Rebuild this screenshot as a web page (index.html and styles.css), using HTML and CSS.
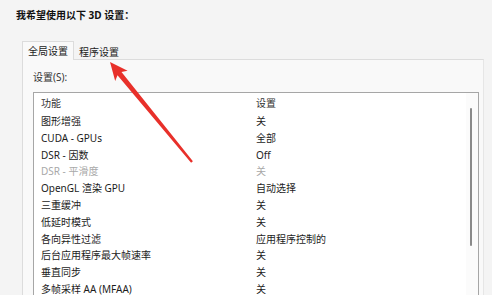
FILE: index.html
```html
<!DOCTYPE html>
<html lang="zh-CN">
<head>
  <meta charset="UTF-8">
  <meta name="viewport" content="width=device-width, initial-scale=1.0">
  <title>3D 设置</title>
  <link rel="stylesheet" href="styles.css">
</head>
<body>

  <section class="window">
    <h1 class="title">我希望使用以下 3D 设置：</h1>

    <div class="tabs">
      <div class="tab active">全局设置</div>
      <div class="tab">程序设置</div>
    </div>

    <div class="panel">
      <div class="label">设置(S):</div>

      <div class="list">
        <div class="list-body">
          <div class="row head"><span class="col-name">功能</span><span class="col-value">设置</span></div>
          <div class="row"><span class="col-name">图形增强</span><span class="col-value">关</span></div>
          <div class="row"><span class="col-name">CUDA - GPUs</span><span class="col-value">全部</span></div>
          <div class="row"><span class="col-name">DSR - 因数</span><span class="col-value">Off</span></div>
          <div class="row disabled"><span class="col-name">DSR - 平滑度</span><span class="col-value">关</span></div>
          <div class="row"><span class="col-name">OpenGL 渲染 GPU</span><span class="col-value">自动选择</span></div>
          <div class="row"><span class="col-name">三重缓冲</span><span class="col-value">关</span></div>
          <div class="row"><span class="col-name">低延时模式</span><span class="col-value">关</span></div>
          <div class="row"><span class="col-name">各向异性过滤</span><span class="col-value">应用程序控制的</span></div>
          <div class="row"><span class="col-name">后台应用程序最大帧速率</span><span class="col-value">关</span></div>
          <div class="row"><span class="col-name">垂直同步</span><span class="col-value">关</span></div>
          <div class="row"><span class="col-name">多帧采样 AA (MFAA)</span><span class="col-value">关</span></div>
        </div>
        <div class="scrollbar">
          <div class="thumb"></div>
        </div>
      </div>
    </div>

    <!-- red pointer to the second tab -->
    <svg class="arrow" width="492" height="295" viewBox="0 0 492 295">
      <polygon fill="#e8302a" points="110,62 127.6,70.8 121.5,71.9 192.9,161.2 191.1,162.8 117.5,75.2 115.2,81"/>
    </svg>
  </section>

</body>
</html>
```

FILE: styles.css
```css
/* General Styles */
* {
  margin: 0;
  padding: 0;
  box-sizing: border-box;
}

body {
  background-color: #f4f4f4;
  font-family: "Noto Sans", "Noto Sans CJK SC", sans-serif;
  font-size: 10px;
  color: #1c1c1c;
  width: 492px;
  height: 295px;
  overflow: hidden;
}

.window {
  position: relative;
  height: 295px;
  overflow: hidden;
  padding-top: 8px;
}

.title {
  font-size: 10px;
  font-weight: bold;
  line-height: 14px;
  padding-left: 16px;
  color: #111;
}

/* Tabs */
.tabs {
  display: flex;
  align-items: flex-end;
  margin-top: 19px;
  padding-left: 22px;
  height: 19px;
}

.tab {
  padding: 0 5px;
  line-height: 15px;
  height: 15px;
  color: #222;
}

.tab.active {
  height: 19px;
  line-height: 18px;
  background-color: #f9f9f9;
  border: 1px solid #dcdcdc;
  border-bottom: none;
  position: relative;
  z-index: 1;
}

/* Tab panel */
.panel {
  margin-left: 22px;
  margin-top: -1px;
  width: 462px;
  height: 237px;
  overflow: hidden;
  background-color: #f9f9f9;
  border: 1px solid #dcdcdc;
  border-right-color: #e6e6e6;
  border-bottom: none;
  padding: 10px 5px 0 10px;
}

.label {
  line-height: 14px;
  color: #333;
}

/* List */
.list {
  display: flex;
  margin-top: 8px;
  width: 446px;
  height: 204px;
  overflow: hidden;
  background-color: #fff;
  border: 1px solid #a6a6a6;
  border-bottom: none;
}

.list-body {
  flex: 1;
}

.row {
  display: flex;
  height: 16.8px;
  line-height: 16.8px;
  padding-left: 7px;
}

.row.head {
  height: 20px;
  line-height: 20px;
  color: #333;
}

.row.disabled {
  color: #a8a8a8;
}

.col-name {
  width: 215px;
  white-space: nowrap;
}

.col-value {
  white-space: nowrap;
}

.scrollbar {
  width: 12px;
  padding-top: 15px;
  background-color: #fbfbfb;
}

.thumb {
  margin-left: 4px;
  width: 2px;
  height: 138px;
  border-radius: 1px;
  background-color: #8a8a8a;
}

.arrow {
  position: absolute;
  left: 0;
  top: 0;
  pointer-events: none;
}
```
